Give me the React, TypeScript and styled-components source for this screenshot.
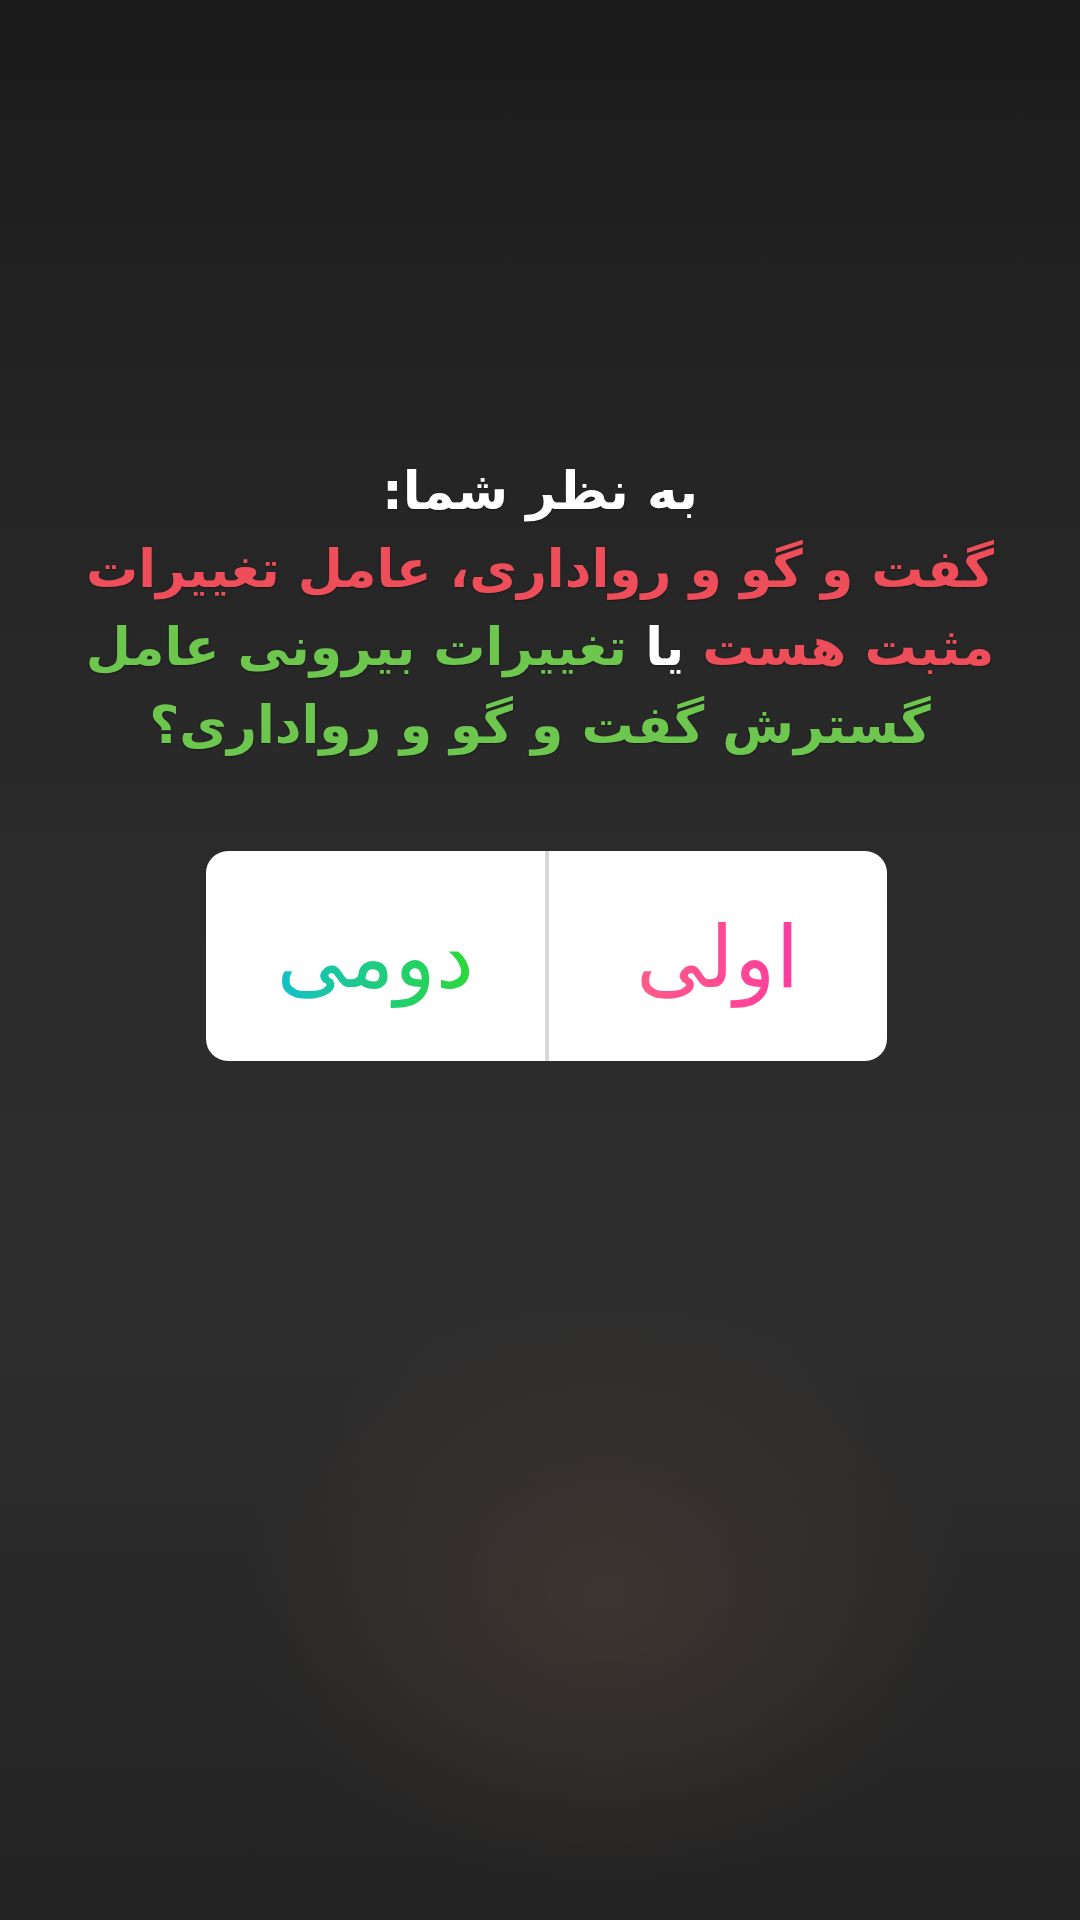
import React from "react";
import styled, { createGlobalStyle } from "styled-components";

const Global = createGlobalStyle`
  html, body { margin: 0; padding: 0; }
  body { background: #262626; }
`;

const Screen = styled.div`
  width: 1080px;
  height: 1920px;
  box-sizing: border-box;
  display: flex;
  flex-direction: column;
  align-items: center;
  padding-top: 452px;
  padding-left: 13px;
  font-family: "DejaVu Sans", sans-serif;
  background:
    radial-gradient(ellipse 520px 420px at 56% 83%, rgba(68, 57, 52, 0.75), rgba(68, 57, 52, 0) 70%),
    linear-gradient(180deg, #1b1b1b 0%, #252525 25%, #2c2c2c 50%, #2d2d2d 70%, #232323 100%);
`;

const Question = styled.div`
  direction: rtl;
  text-align: center;
  font-weight: bold;
  font-size: 52px;
  line-height: 78px;
  color: #ffffff;
  margin-left: -13px;
  text-shadow: 0 1px 2px rgba(0, 0, 0, 0.35);
`;

const Span = styled.span<{ $tone: "white" | "red" | "green" }>`
  color: ${(p) => (p.$tone === "red" ? "#ee4d5a" : p.$tone === "green" ? "#6dc64d" : "#ffffff")};
`;

const Card = styled.div`
  margin-top: 87px;
  width: 681px;
  height: 210px;
  background: #ffffff;
  border-radius: 22px;
  display: flex;
  flex-direction: row-reverse;
  overflow: hidden;
`;

const Option = styled.div`
  flex: 1;
  display: flex;
  align-items: center;
  justify-content: center;
  direction: rtl;
`;

const Divider = styled.div`
  width: 4px;
  background: #d8d8d8;
`;

const OptionText = styled.span<{ $from: string; $to: string }>`
  font-family: "DejaVu Sans", sans-serif;
  font-size: 86px;
  line-height: 1.2;
  padding-top: 4px;
  background: linear-gradient(270deg, ${(p) => p.$from}, ${(p) => p.$to});
  -webkit-background-clip: text;
  background-clip: text;
  color: transparent;
`;

export default function App() {
  return (
    <>
      <Global />
      <Screen>
        <Question>
          <Span $tone="white">به نظر شما:</Span>
          <br />
          <Span $tone="red">گفت و گو و رواداری، عامل تغییرات</Span>
          <br />
          <Span $tone="red">مثبت هست</Span> <Span $tone="white">یا</Span>{" "}
          <Span $tone="green">تغییرات بیرونی عامل</Span>
          <br />
          <Span $tone="green">گسترش گفت و گو و رواداری؟</Span>
        </Question>
        <Card>
          <Option>
            <OptionText $from="#ff3b9f" $to="#ff5c86">اولی</OptionText>
          </Option>
          <Divider />
          <Option>
            <OptionText $from="#2bd936" $to="#14bfcc">دومی</OptionText>
          </Option>
        </Card>
      </Screen>
    </>
  );
}
